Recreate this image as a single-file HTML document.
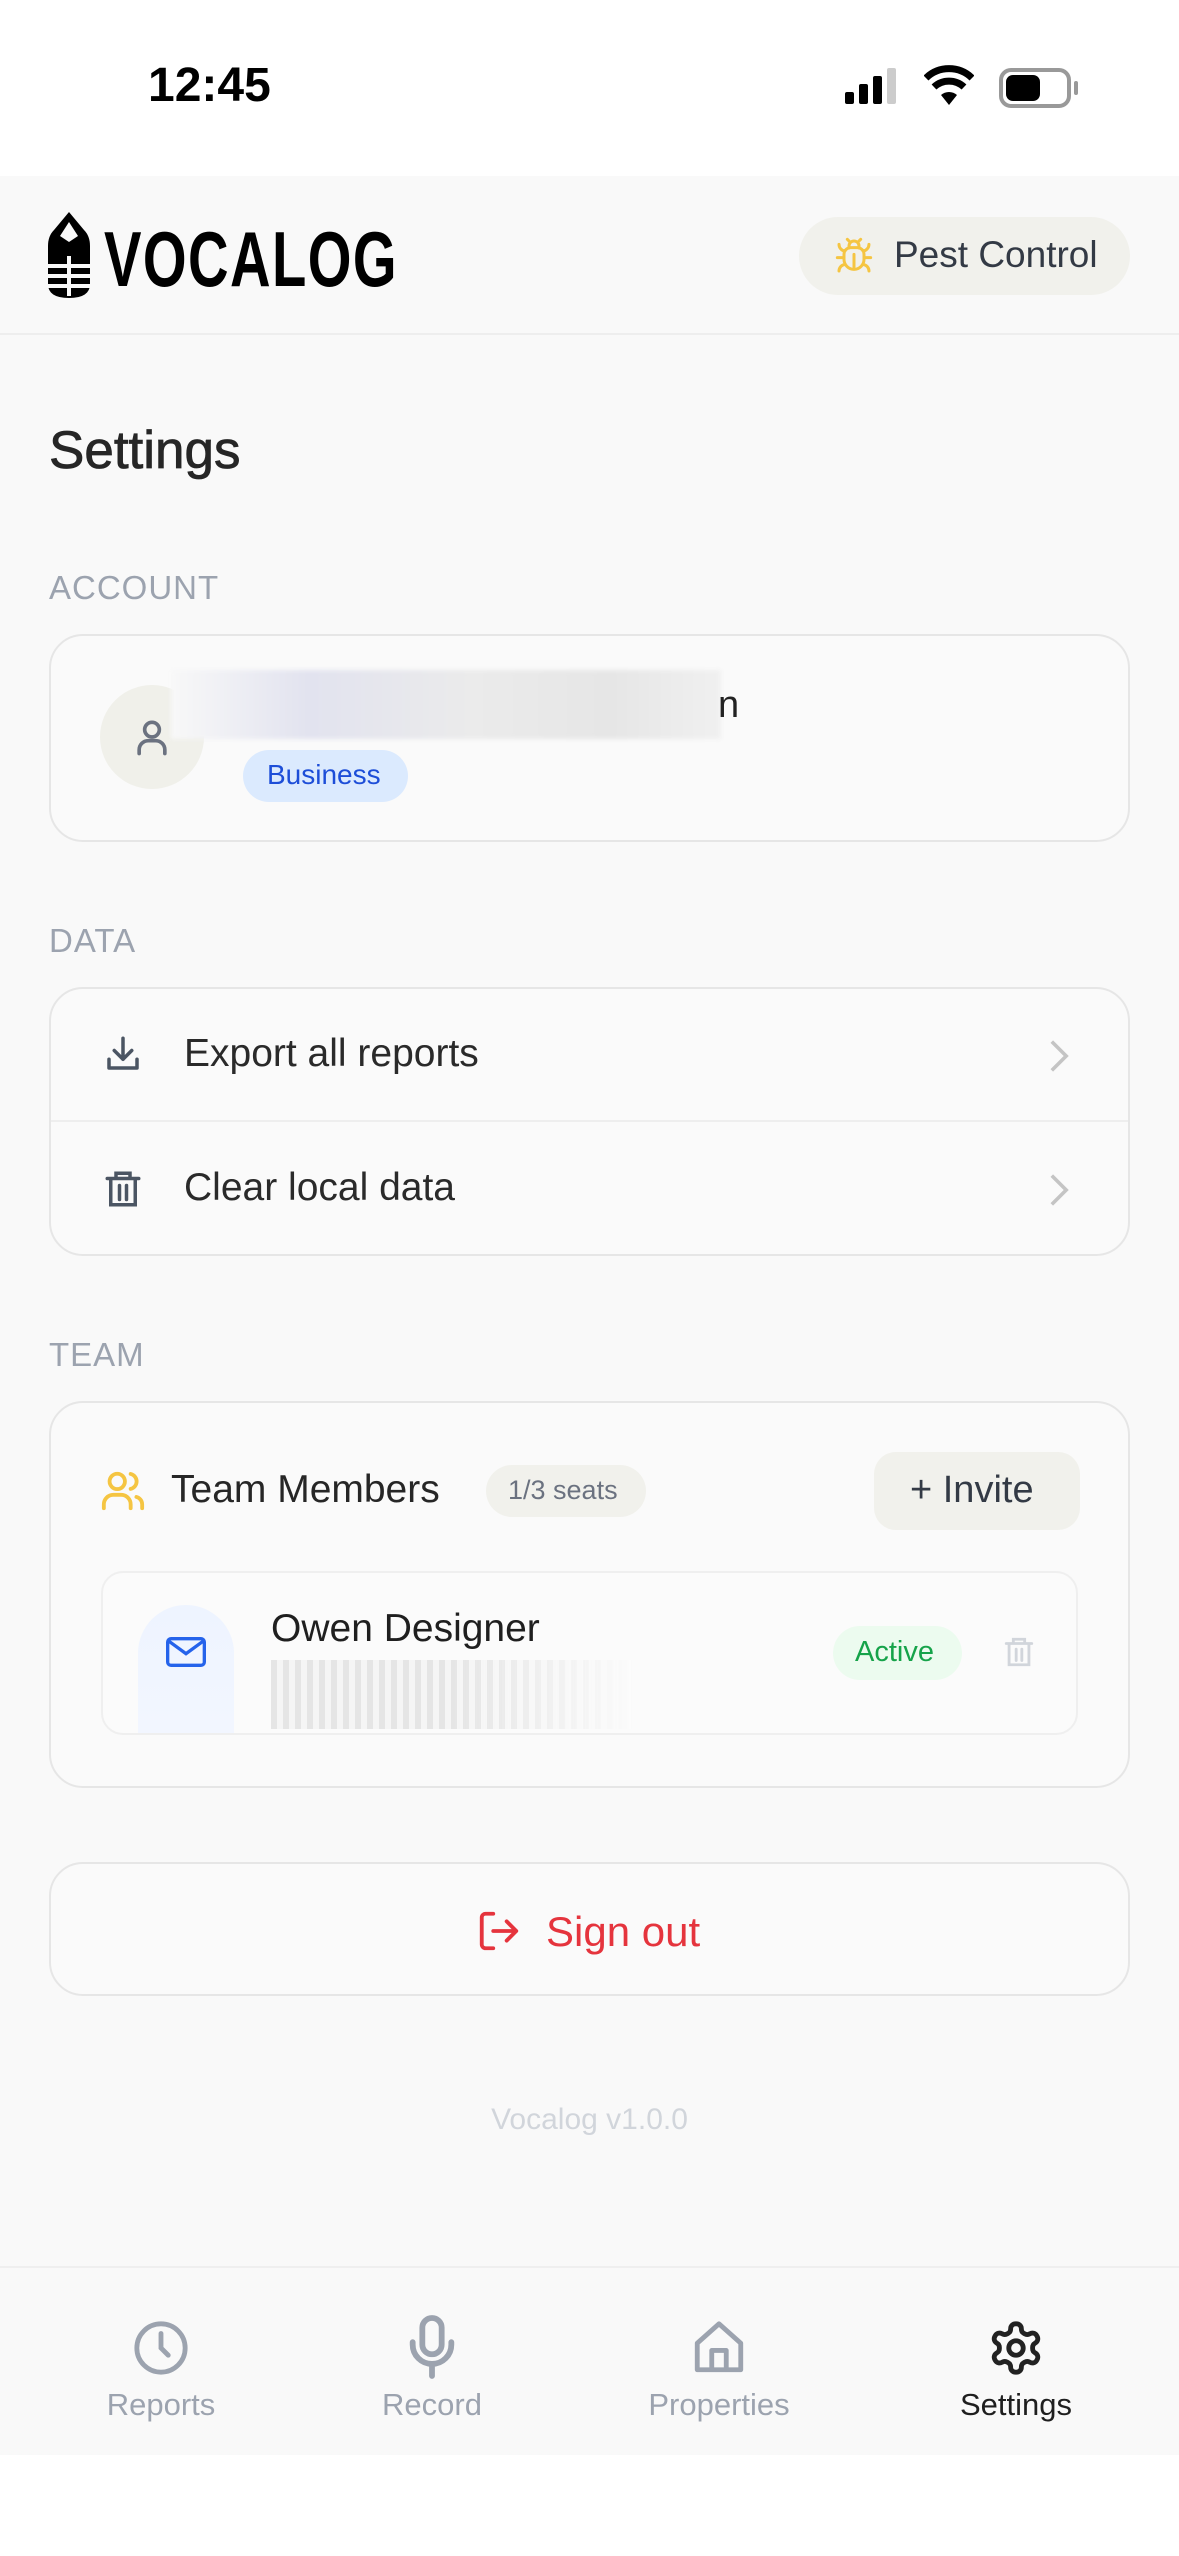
<!DOCTYPE html>
<html><head><meta charset="utf-8"><style>
*{margin:0;padding:0;box-sizing:border-box}
body{width:1179px;height:2556px;background:#fff;font-family:"Liberation Sans",sans-serif;position:relative;overflow:hidden;color:#1f1f1f}
.a{position:absolute}
.main{left:0;top:176px;width:1179px;height:2279px;background:#f9f9f9}
.card{position:absolute;left:49px;width:1081px;border:2px solid #e6e6e6;border-radius:34px;background:#fafafa}
.lbl{position:absolute;left:49px;font-size:33px;color:#9ca3af;letter-spacing:1px}
.t{position:absolute;white-space:nowrap}
svg{position:absolute}
</style></head><body>
<div class="t" style="left:148px;top:58px;font-size:48px;font-weight:bold;color:#000">12:45</div>
<svg style="left:845px;top:66px" width="58" height="40" viewBox="0 0 58 40"><rect x="0" y="26" width="9" height="12" rx="2" fill="#000"/><rect x="14" y="18" width="9" height="20" rx="2" fill="#000"/><rect x="28" y="10" width="9" height="28" rx="2" fill="#000"/><rect x="42" y="2" width="9" height="36" rx="2" fill="#ccc"/></svg>
<svg style="left:924px;top:64px" width="50" height="42" viewBox="0 0 50 42"><path d="M2 14 A33 33 0 0 1 48 14" stroke="#000" stroke-width="7" fill="none"/><path d="M10 23 A22 22 0 0 1 40 23" stroke="#000" stroke-width="7" fill="none"/><path d="M25 41 L17 31 A12 12 0 0 1 33 31 Z" fill="#000"/></svg>
<div class="a" style="left:999px;top:68px;width:72px;height:40px;border:4px solid #999;border-radius:12px"></div>
<div class="a" style="left:1006px;top:75px;width:34px;height:26px;background:#000;border-radius:7px"></div>
<div class="a" style="left:1074px;top:81px;width:4px;height:14px;background:#999;border-radius:2px"></div>

<div class="a main"></div>
<div class="a" style="left:0;top:333px;width:1179px;height:2px;background:#eeeeee"></div>
<svg style="left:46px;top:212px" width="46" height="86" viewBox="0 0 46 86"><path d="M23 0 L38 18 Q44 24 44 34 L44 72 Q44 86 23 86 Q2 86 2 72 L2 34 Q2 24 8 18 Z" fill="#000"/><path d="M23 10 L32 24 L23 30 L14 24 Z" fill="#f9f9f9"/><rect x="0" y="52" width="46" height="4" fill="#f9f9f9"/><rect x="0" y="62" width="46" height="4" fill="#f9f9f9"/><rect x="0" y="72" width="46" height="4" fill="#f9f9f9"/><rect x="21" y="44" width="4" height="40" fill="#f9f9f9"/></svg>
<div class="t" style="left:104px;top:216px;font-size:78px;font-weight:bold;letter-spacing:2px;color:#000;transform:scaleX(0.72);transform-origin:left;line-height:86px">VOCALOG</div>
<div class="a" style="left:799px;top:217px;width:331px;height:78px;border-radius:39px;background:#f1f1ec"></div>
<svg style="left:834px;top:236px" width="40" height="40" viewBox="0 0 24 24" fill="none" stroke="#f5c542" stroke-width="1.8" stroke-linecap="round"><path d="M8 2l1.9 1.9M16 2l-1.9 1.9M9 7.1V6a3 3 0 0 1 6 0v1.1"/><path d="M12 20c-3.3 0-6-2.7-6-6v-3a4 4 0 0 1 4-4h4a4 4 0 0 1 4 4v3c0 3.3-2.7 6-6 6zM12 20v-9M6.5 9C4.6 8.8 3 7.1 3 5M6 13H2M3 21c0-2.1 1.7-3.9 3.8-4M20.97 5c0 2.1-1.6 3.8-3.5 4M22 13h-4M17.2 17c2.1.1 3.8 1.9 3.8 4"/></svg>
<div class="t" style="left:894px;top:234px;font-size:37px;color:#333a45">Pest Control</div>

<div class="t" style="left:49px;top:420px;font-size:53px;color:#262626;-webkit-text-stroke:0.8px #262626">Settings</div>
<div class="lbl" style="top:569px">ACCOUNT</div>
<div class="card" style="top:634px;height:208px"></div>
<div class="a" style="left:100px;top:685px;width:104px;height:104px;border-radius:52px;background:#f0f0ea"></div>
<svg style="left:130px;top:713px" width="44" height="48" viewBox="0 0 24 24" fill="none" stroke="#6b7280" stroke-width="2" stroke-linecap="round"><circle cx="12" cy="8" r="4"/><path d="M5 21v-2a5 5 0 0 1 5-5h4a5 5 0 0 1 5 5v2"/></svg>
<div class="a" style="left:171px;top:670px;width:550px;height:69px;background:linear-gradient(90deg,#f8f8f8,#e2e3ef 25%,#ebebeb 55%,#e6e6e6 80%,#f0f0f0);filter:blur(2px)"></div>
<div class="t" style="left:718px;top:684px;font-size:38px;color:#222">n</div>
<div class="a" style="left:243px;top:750px;width:165px;height:52px;border-radius:26px;background:#dbeafe"></div>
<div class="t" style="left:267px;top:759px;font-size:28px;color:#1d4ed8">Business</div>

<div class="lbl" style="top:922px">DATA</div>
<div class="card" style="top:987px;height:269px"></div>
<div class="a" style="left:51px;top:1120px;width:1077px;height:2px;background:#eeeeee"></div>
<svg style="left:102px;top:1032px" width="42" height="44" viewBox="0 0 24 24" fill="none" stroke="#4b5563" stroke-width="2" stroke-linecap="round" stroke-linejoin="round"><path d="M12 3v12M7 10l5 5 5-5M4 15v5h16v-5"/></svg>
<div class="t" style="left:184px;top:1032px;font-size:39px;color:#2a2a2a">Export all reports</div>
<svg style="left:1048px;top:1038px" width="22" height="36" viewBox="0 0 12 20" fill="none" stroke="#c4c4c4" stroke-width="2"><path d="M2 2l8 8-8 8"/></svg>
<svg style="left:102px;top:1166px" width="42" height="46" viewBox="0 0 24 24" fill="none" stroke="#4b5563" stroke-width="2" stroke-linecap="round"><path d="M3 6h18M8 6V3h8v3M5 6v15h14V6M10 10v8M14 10v8"/></svg>
<div class="t" style="left:184px;top:1166px;font-size:39px;color:#2a2a2a">Clear local data</div>
<svg style="left:1048px;top:1172px" width="22" height="36" viewBox="0 0 12 20" fill="none" stroke="#c4c4c4" stroke-width="2"><path d="M2 2l8 8-8 8"/></svg>

<div class="lbl" style="top:1336px">TEAM</div>
<div class="card" style="top:1401px;height:387px"></div>
<svg style="left:100px;top:1468px" width="46" height="46" viewBox="0 0 24 24" fill="none" stroke="#f5c542" stroke-width="2" stroke-linecap="round"><circle cx="9" cy="7" r="4"/><path d="M2 21v-2a5 5 0 0 1 5-5h4a5 5 0 0 1 5 5v2M16 3.1a4 4 0 0 1 0 7.8M22 21v-2a4 4 0 0 0-3-3.9"/></svg>
<div class="t" style="left:171px;top:1468px;font-size:39px;color:#262626">Team Members</div>
<div class="a" style="left:486px;top:1465px;width:160px;height:52px;border-radius:26px;background:#f1f1ec"></div>
<div class="t" style="left:508px;top:1475px;font-size:27px;color:#6b7280">1/3 seats</div>
<div class="a" style="left:874px;top:1452px;width:206px;height:78px;border-radius:22px;background:#f1f1ec"></div>
<div class="t" style="left:910px;top:1469px;font-size:38px;color:#333a45">+ Invite</div>
<div class="a" style="left:101px;top:1571px;width:977px;height:164px;border:2px solid #efefef;border-radius:22px;background:#fbfbfb"></div>
<div class="a" style="left:138px;top:1605px;width:96px;height:128px;border-radius:48px 48px 0 0;background:linear-gradient(#eef4ff,#f2f6ff)"></div>
<svg style="left:166px;top:1636px" width="40" height="32" viewBox="0 0 24 18" fill="none" stroke="#2563eb" stroke-width="2"><rect x="1" y="1" width="22" height="16" rx="2"/><path d="M1 2l11 8 11-8"/></svg>
<div class="t" style="left:271px;top:1607px;font-size:39px;color:#1f1f1f">Owen Designer</div>
<div class="a" style="left:271px;top:1660px;width:520px;height:69px;background:repeating-linear-gradient(90deg,#dcdcdc 0 6px,#f3f3f3 6px 12px);opacity:.7;-webkit-mask:linear-gradient(90deg,#000 0 35%,transparent 70%);mask:linear-gradient(90deg,#000 0 35%,transparent 70%)"></div>
<div class="a" style="left:833px;top:1626px;width:129px;height:54px;border-radius:27px;background:#ecfbef"></div>
<div class="t" style="left:855px;top:1636px;font-size:29px;color:#16a34a">Active</div>
<svg style="left:1002px;top:1632px" width="34" height="40" viewBox="0 0 24 24" fill="none" stroke="#d1d5db" stroke-width="2" stroke-linecap="round"><path d="M3 6h18M8 6V3h8v3M5 6v15h14V6M10 10v8M14 10v8"/></svg>

<div class="card" style="top:1862px;height:134px"></div>
<svg style="left:476px;top:1908px" width="46" height="46" viewBox="0 0 24 24" fill="none" stroke="#e5343d" stroke-width="2" stroke-linecap="round" stroke-linejoin="round"><path d="M9 21H5a2 2 0 0 1-2-2V5a2 2 0 0 1 2-2h4M16 17l5-5-5-5M21 12H9"/></svg>
<div class="t" style="left:546px;top:1908px;font-size:42px;color:#e5343d">Sign out</div>
<div class="t" style="left:0;width:1179px;text-align:center;top:2103px;font-size:30px;color:#d1d5db">Vocalog v1.0.0</div>

<div class="a" style="left:0;top:2266px;width:1179px;height:2px;background:#efefef"></div>
<svg style="left:132px;top:2318px" width="58" height="60" viewBox="0 0 24 24" fill="none" stroke="#9ca3af" stroke-width="2" stroke-linecap="round"><circle cx="12" cy="12" r="10"/><path d="M12 6v6l3 3"/></svg>
<div class="t" style="left:61px;width:200px;text-align:center;top:2387px;font-size:31px;color:#9ca3af">Reports</div>
<svg style="left:403px;top:2314px" width="58" height="66" viewBox="0 0 24 26" fill="none" stroke="#9ca3af" stroke-width="2.4" stroke-linecap="round"><rect x="8" y="1" width="8" height="15" rx="4"/><path d="M4 11v1a8 8 0 0 0 16 0v-1M12 20v5"/></svg>
<div class="t" style="left:332px;width:200px;text-align:center;top:2387px;font-size:31px;color:#9ca3af">Record</div>
<svg style="left:690px;top:2318px" width="58" height="60" viewBox="0 0 24 24" fill="none" stroke="#9ca3af" stroke-width="2" stroke-linejoin="round"><path d="M3 10l9-8 9 8v11H3z"/><path d="M9 21v-8h6v8"/></svg>
<div class="t" style="left:619px;width:200px;text-align:center;top:2387px;font-size:31px;color:#9ca3af">Properties</div>
<svg style="left:987px;top:2318px" width="58" height="60" viewBox="0 0 24 24" fill="none" stroke="#222" stroke-width="2" stroke-linecap="round" stroke-linejoin="round"><path d="M12.22 2h-.44a2 2 0 0 0-2 2v.18a2 2 0 0 1-1 1.730l-.43.25a2 2 0 0 1-2 0l-.15-.08a2 2 0 0 0-2.73.73l-.22.38a2 2 0 0 0 .73 2.73l.15.1a2 2 0 0 1 1 1.72v.51a2 2 0 0 1-1 1.74l-.15.09a2 2 0 0 0-.73 2.73l.22.38a2 2 0 0 0 2.73.73l.15-.08a2 2 0 0 1 2 0l.43.25a2 2 0 0 1 1 1.73V20a2 2 0 0 0 2 2h.44a2 2 0 0 0 2-2v-.18a2 2 0 0 1 1-1.73l.43-.25a2 2 0 0 1 2 0l.15.08a2 2 0 0 0 2.73-.73l.22-.39a2 2 0 0 0-.73-2.73l-.15-.08a2 2 0 0 1-1-1.74v-.5a2 2 0 0 1 1-1.74l.15-.09a2 2 0 0 0 .73-2.73l-.22-.38a2 2 0 0 0-2.73-.73l-.15.08a2 2 0 0 1-2 0l-.43-.25a2 2 0 0 1-1-1.73V4a2 2 0 0 0-2-2z"/><circle cx="12" cy="12" r="3"/></svg>
<div class="t" style="left:916px;width:200px;text-align:center;top:2387px;font-size:31px;color:#1f1f1f">Settings</div>
</body></html>
